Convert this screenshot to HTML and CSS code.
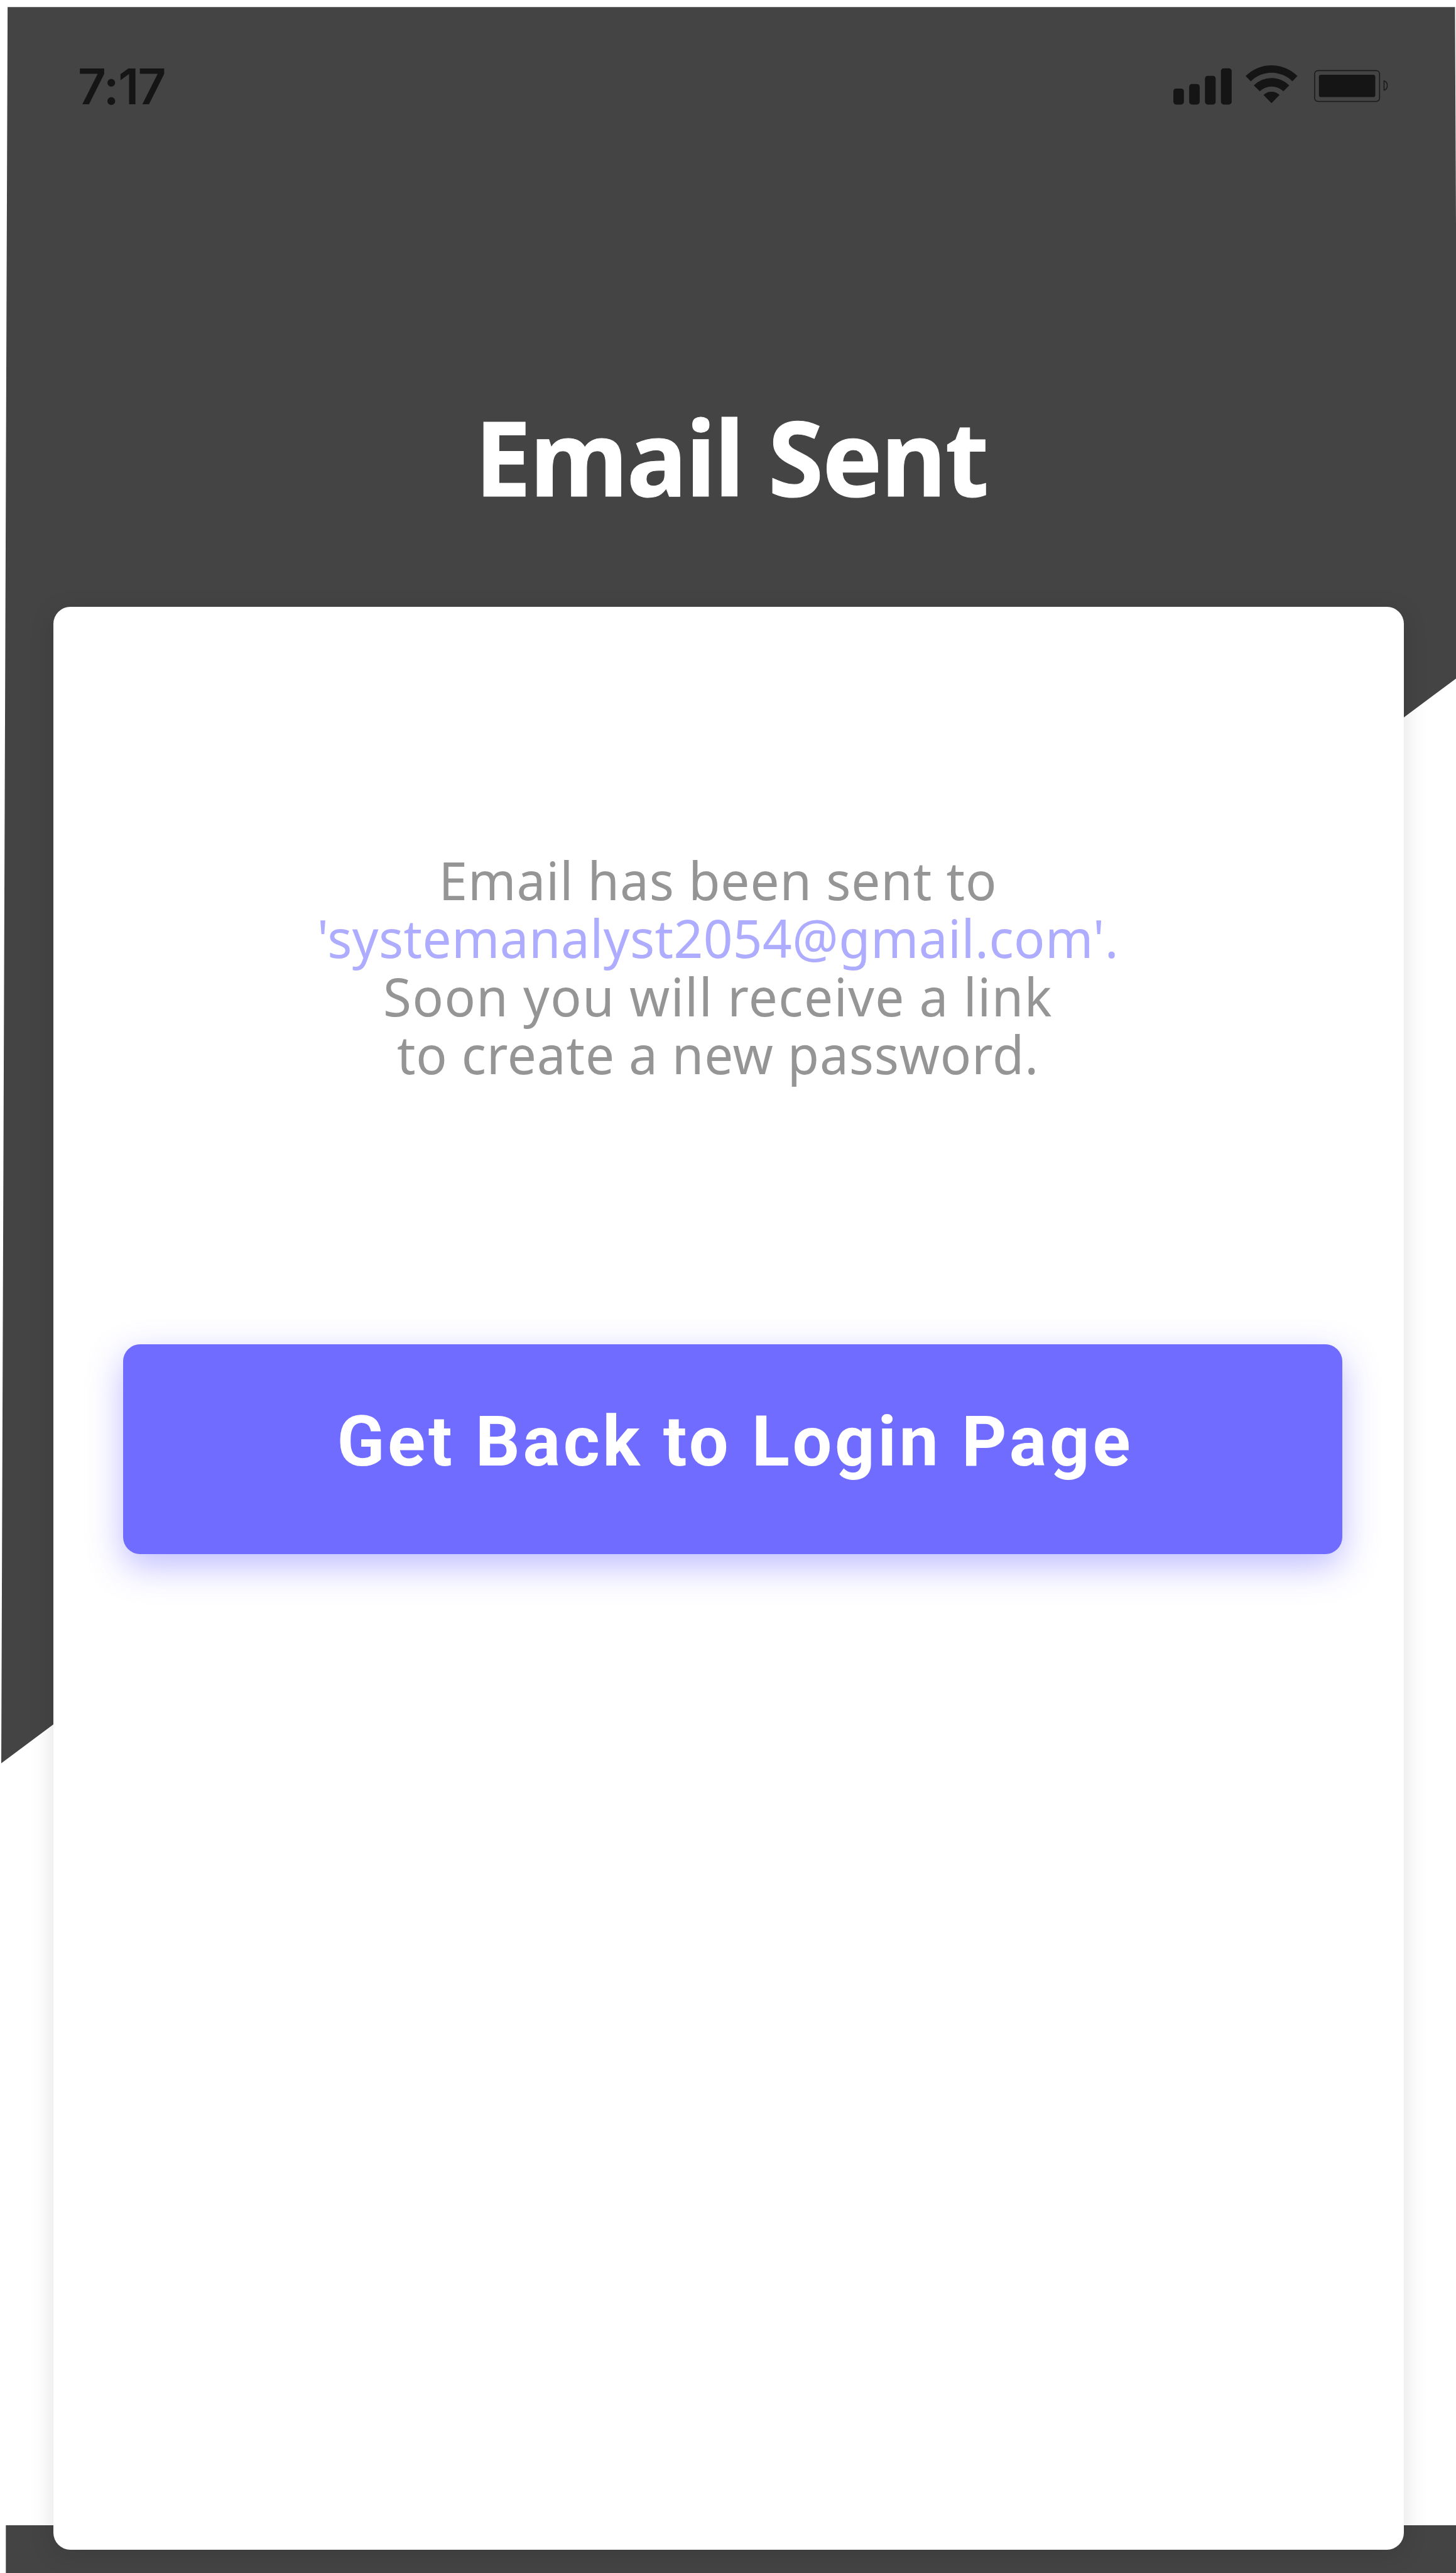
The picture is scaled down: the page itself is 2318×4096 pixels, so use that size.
FILE: index.html
```
<!DOCTYPE html>
<html lang="en">
<head>
<meta charset="utf-8">
<title>Email Sent</title>
<link rel="stylesheet" href="styles.css">
</head>
<body>
<main class="screen">
  <div class="backdrop"></div>
  <header class="status-bar">
    <span class="time">7:17</span>
    <div class="indicators">
      <svg class="signal" viewBox="132 96 299 201" aria-hidden="true">
        <rect x="132" y="215" width="54" height="82" rx="14"/>
        <rect x="213" y="192" width="54" height="105" rx="14"/>
        <rect x="294" y="150" width="55" height="147" rx="14"/>
        <rect x="376" y="111" width="55" height="186" rx="14"/>
      </svg>
      <svg class="wifi" viewBox="503 96 266 201" aria-hidden="true">
        <path d="M503 151A188 188 0 0 1 769 151L743 178A151 151 0 0 0 530 178Z"/>
        <path d="M545 199A128 128 0 0 1 727 199L697 229A88 88 0 0 0 576 229Z"/>
        <path d="M595 248A58 58 0 0 1 677 248L636 290Z"/>
      </svg>
      <svg class="battery" viewBox="855 96 379 201" aria-hidden="true">
        <rect class="outline" x="858" y="123" width="333" height="158" rx="17"/>
        <rect x="880" y="144" width="289" height="115" rx="11"/>
        <path class="outline" d="M1214 176C1236 182 1236 217 1214 223Z"/>
      </svg>
    </div>
  </header>
  <h1 class="title">Email Sent</h1>
  <section class="card">
    <p class="message">
      <span class="line line-sent">Email has been sent to</span>
      <span class="line line-address">'systemanalyst2054@gmail.com'.</span>
      <span class="line line-soon">Soon you will receive a link</span>
      <span class="line line-create">to create a new password.</span>
    </p>
    <button class="login-button" type="button">Get Back to Login Page</button>
  </section>
</main>
</body>
</html>
```
FILE: styles.css
```
* {
  box-sizing: border-box;
}

body {
  margin: 0;
  background: #fff;
}

.screen {
  position: relative;
  display: flex;
  flex-direction: column;
  width: 2318px;
  height: 4096px;
  padding-top: 104.4px;
  overflow: hidden;
}

/* Slanted dark panel and the strip along the bottom edge */
.backdrop {
  position: absolute;
  inset: 0;
  z-index: -1;
  background: #444;
  clip-path: polygon(12.1px 11.2px, 2316.4px 11.2px, 2318px 360px, 2318px 1080.2px, 2px 2807px, 2px 4019.9px, 2318px 4019.9px, 2318px 4096px, 9.3px 4096px, 9.3px 4019.9px, 2px 4019.9px, 2px 2807px);
}

.status-bar {
  display: flex;
  justify-content: space-between;
  flex: none;
  height: 62.4px;
  padding: 0 107.9px 0 124px;
}

.time {
  margin-top: 2.4px;
  color: #151515;
  font: 600 78.2px/62.4px Inter, sans-serif;
  letter-spacing: -1.6px;
}

.indicators {
  display: flex;
}

.indicators svg {
  height: 62.4px;
  fill: #151515;
  overflow: visible;
}

.signal {
  width: 92.9px;
}

.wifi {
  width: 82.6px;
  margin-left: 22.4px;
}

.battery {
  width: 117.7px;
  margin-left: 26.7px;
}

.indicators .outline {
  fill: none;
  stroke: #1b1b1b;
  stroke-width: 5;
}

.title {
  flex: none;
  width: 1000px;
  margin: 459.4px 0 140.3px 664.4px;
  color: #fff;
  font: 700 164.5px/200px "Noto Sans", sans-serif;
  letter-spacing: -2.2px;
  text-align: center;
  transform: scaleX(0.975);
  -webkit-text-stroke: 1px #fff;
}

.card {
  flex: none;
  width: 2150.2px;
  height: 3092.4px;
  margin-left: 84.8px;
  padding: 387.5px 97.9px 0 110.9px;
  border-radius: 27px;
  background: #fff;
  box-shadow: 0 8px 40px rgba(0, 0, 0, 0.12);
}

.message {
  width: 1500px;
  margin: 0 0 417.3px 197.6px;
  color: #959595;
  font: 400 84.8px/92.27px "Noto Sans", sans-serif;
  text-align: center;
  transform: scaleX(0.965);
}

.line {
  display: block;
  white-space: nowrap;
}

.line-sent {
  letter-spacing: 0.95px;
}

.line-address {
  color: #aeacff;
  letter-spacing: 0.4px;
}

.line-soon {
  letter-spacing: 1.5px;
}

.line-create {
  letter-spacing: 0.85px;
}

.login-button {
  display: block;
  width: 1941.4px;
  height: 333.6px;
  padding: 0 0 23.6px 8px;
  border: 0;
  border-radius: 27px;
  background: #6f6cff;
  box-shadow: 0 19px 56px rgba(110, 107, 255, 0.45);
  color: #fff;
  font: 700 111.4px/130px Roboto, sans-serif;
  letter-spacing: 4.66px;
}
```
